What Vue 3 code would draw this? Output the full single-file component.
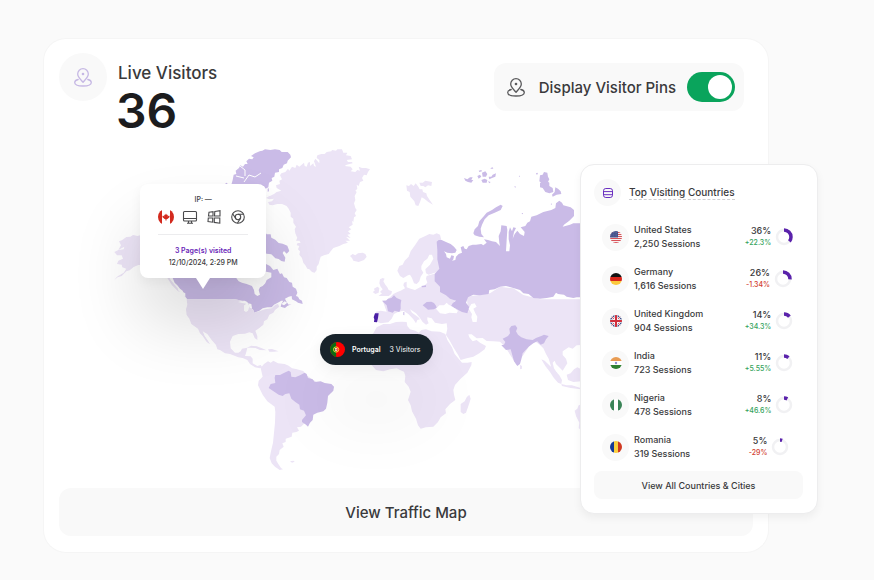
<script setup>
import { ref } from 'vue'

const showPins = ref(true)

const countries = [
  { code: 'us', name: 'United States', sessions: '2,250', share: 36, change: '+22.3%' },
  { code: 'de', name: 'Germany', sessions: '1,616', share: 26, change: '-1.34%' },
  { code: 'gb', name: 'United Kingdom', sessions: '904', share: 14, change: '+34.3%' },
  { code: 'in', name: 'India', sessions: '723', share: 11, change: '+5.55%' },
  { code: 'ng', name: 'Nigeria', sessions: '478', share: 8, change: '+46.6%' },
  { code: 'ro', name: 'Romania', sessions: '319', share: 5, change: '-29%' }
]

// Land shapes; each group has its own origin on the map, three units per map pixel.
const americas = [
  // Alaska
  { tone: 'light', d: 'M-155-90l8-14-6-12 10-4 12-9 12-1 8-5 14 3 10-3 60 20v70l-40 0-28 0-14 6-12 10-10 3-14 14-12 4-10 8 8-10 20-12 8-12-12-4-2-8-14-2 4-10 14-6-4-10-14 0-8-10 12-6 16-2 2-8z' },
  { tone: 'light', d: 'M-30-30l20 5 12 25 18 22 12 14-8-2-18-18-14-22z' },
  // Canada
  { tone: 'dark', d: 'M-30-60L-10-25 8-6 14 8 22 16 30 26 38 32 44 48 52 58H195L206 60 215 62 224 62 232 66 238 78 250 90 252 98 268 92 278 85 292 82 305 82 312 74 322 69 334 62 340 62 334 72 332 80 345 84 352 78 365 72 356 74 350 66 345 56 356 50 365 48 366 58 378 64 384 68 398 72 396 62 388 58 384 50 378 48 382 38 378 26 368 20 366 8 358 6 350-6 342-8 336-20 330-18 322-34 310-30 300-42 288-48 282-60z' },
  { tone: 'dark', d: 'M272-145l14 2 4 6 12 0 2 10 12 6 10 10 12 2 14 6 6 16-8 8-8-8-4 6 8 14-2 12-10-2-8-6-10-2-12-12-14-2-18-8z' },
  { tone: 'dark', d: 'M184-286l4-14 3-16 8-2-2-10 10-8 4-8 8 4 6-8 8 0-4-8 8-8 10 2 4-6-8-4 12-8 14-6 8-2 8-4 16 2 14-2 14 2 6 6 18 0 8 8 2 8-10 10-2 8-10 4-4 10-10 4 0 8-12 2-2 12-8 4 2 8-10 6-2 14-8 4-6-8z' },
  { tone: 'dark', d: 'M166-290l5-2 2 5-5 2z M293-274l3-2 1 10-4 1z' },
  // United States, Mexico and Central America
  { tone: 'light', d: 'M50 58H195L206 60 215 62 228 70 224 78 228 96 234 92 238 80 250 90 252 98 268 94 285 88 305 85 316 74 324 72 328 80 315 90 310 98 298 104 292 118 282 124 280 134 268 144 256 152 262 168 262 180 254 174 248 160 238 157 225 161 205 162 188 168 180 185 182 205 195 218 205 218 212 214 216 206 232 203 228 220 225 228 242 229 248 236 248 250 262 258 272 255 277 262 270 265 255 262 240 252 232 240 218 234 205 232 180 222 165 220 150 210 142 208 138 195 125 180 112 162 98 154 104 168 114 182 120 193 110 186 98 168 90 160 84 146 64 132 58 116 50 105 48 88 52 74z' },
  { tone: 'light', d: 'M230 203l14-6 16 2 16 6 14 6-20-1-14-6-14-1z M294 208l12-1 20 7-14 1-14 0z' },
  // South America
  { tone: 'light', d: 'M272 264l10-12 12-8 8 4 8-6 14 8 20 2 12 5 10 8 12 2 22 6 8 12 30 20-20 60-10 60-15 15-12 2 6 10-8 4-12 2-2 12-18 6 0 10-10 4 4 10-12 10-2 12-8 8 0 12 6 10 8 12 6 4-10 2-14-10-10-10-6-16 4-20 6-26 3-30 3-30 1-32-2-16-22-16-14-20-14-28 2-14 12-12z' },
  { tone: 'light', d: 'M360 544l10-2 4 3-8 3z' },
  { tone: 'dark', d: 'M296 324l6-12 14-3-2-16 2-8 14 0 10-5 16-8 6 4 2 14 12 2 14-6 14-8 6 4 4 12 14 4 6 8 18-2 12 5 20 3 8 8-2 12-16 16-2 20-4 18-8 8-18 4-12 6-2 16-8 8-6 12-6-6-12-8 0-6 12-14-6-14-12-4-2-14-12-8-12-10-6-16-12 2-8 6-12-4z' }
]

const eurasia = [
  // Europe and Asia
  { tone: 'light', d: 'M128 182L140 180 150 172 160 162 172 156 182 152 195 145 190 136 192 128 200 125 200 142 212 146 225 150 240 142 250 140 262 128 258 116 260 108 292 98 305 150 345 178 340 205 385 215 380 170 450 160 480 140 520 145 550 165 600 178H725V315L710 316 698 326 686 322 668 334 668 345 678 356 682 370 668 392 660 384 648 372 644 362 638 368 642 385 650 398 655 410 645 405 636 392 632 376 626 356 618 342 610 325 600 315 580 300 530 375 495 320 480 305 460 304 440 303 428 294 410 295 395 283 385 283 388 292 398 304 410 300 420 308 438 318 434 328 418 340 400 350 380 355 362 360 354 344 340 322 328 300 318 285 322 266 320 250 306 252 285 248 275 235 262 232 262 240 266 250 258 254 248 246 240 234 228 220 210 208 216 218 235 232 240 238 232 240 228 250 220 238 205 222 190 212 174 216 162 222 155 236 145 247 122 250 105 243 106 228 108 215 122 212 140 215z' },
  // Scandinavia and Finland
  { tone: 'light', d: 'M172 92l6-14 10-4 6-12 12-12 6-16 14-20 12-18 18-8 12-6 12 2 10-4 10 4 4 16 2 40 4 40-12 16-14 2-18 6-8-4-2-12 14-14 10-18-4-12-8 0-6 12-10 8-8 14 0 10 6 10-8 12-4 14-8 8-8-2-6-16-6-10-6 2-14 8-10-6z' },
  // British Isles, Iceland
  { tone: 'light', d: 'M116 168l10-8-6-4 8-8-6-8-4-10 2-12 8-4 6 2-4 8 6 10 6 8 4 8 10 4-2 8-8 6-14 0z M98 156l6-4-2-6 10-6 6 4-2 14-10 4z M30 48l8-6 8 4 8-6 14-2 8 4 4 8-8 10-16 6-16-4-4-8z' },
  // Svalbard
  { tone: 'light', d: 'M199-164l8 2 6-6 8 6 6-8 8 10 4 8 8 0 2 8 10 4 2 8 8 12 10 14-14-8-12-10-8-4-4 12-6 14-8-2-4-12-12-14-2-14-8-4z M238-172l10 0 8-6 20 4-2 12-10-2-8 6-6-4-8 0z' },
  // Africa, Madagascar
  { tone: 'light', d: 'M110 262L130 252 150 252 168 246 185 245 200 246 202 258 210 268 226 272 236 278 244 270 258 268 275 274 300 275 316 282 322 300 336 322 344 342 356 356 366 368 382 368 395 366 394 376 382 398 362 416 345 435 340 450 342 464 346 480 330 492 316 508 318 520 302 532 294 546 280 560 258 562 242 566 234 556 228 536 216 514 212 496 204 480 212 455 206 440 194 426 196 408 192 395 180 390 170 385 150 388 130 394 108 390 94 374 78 358 70 320 85 290 100 280z M362 492l12-8 6-12 8-8 4 12-4 14-10 28-8 4-8-6 0-12z M540 374l6 4 0 8-6 2z' },
  // Southeast Asia, Australia
  { tone: 'light', d: 'M604 358l10 4 14 14 16 14 14 16 8 14-2 12-10-4-14-16-10-16-14-18z M664 432l16 4 16 0 26 8 0 4-30-4-26-6z M680 404l12-4 10-12 10-6 12 6v36l-24 2-16-6z M704 512l8-6 4-10 10-4v82l-10-10 2-16-10-20z' },
  // Russia
  { tone: 'dark', d: 'M290 5L296 0 305 0 318 6 332 12 342 20 350 30 346 38 336 40 322 38 312 34 318 42 320 52 330 56 334 46 342 48 340 58 336 62 346 60 348 50 356 42 366 38 362 22 370 18 374 26 380 28 386 18 398 14 408 14 424 12 430 16 440 8 432-2 444 0 456 4 468 6 480 18 478 8 476-12 482-26 484-44 500-42 502-30 500 0 498 34 508 34 510 16 506-2 506-24 510-38 516-26 520-38 528-36 522-24 518-4 524-18 532-28 540-18 552-12 554-24 542-38 556-42 562-52 570-56 574-70 590-74 610-84 634-90 646-96 648-110 658-118 666-112 670-104 692-98 702-90 702-72 694-64 688-58 672-46 668-40 690-46 700-50H725V172L710 172 700 174 680 170 672 164 654 162 648 158 640 170 620 174 600 176 580 174 566 162 550 160 540 150 520 144 498 138 480 140 464 148 448 150 446 162 420 166 400 164 384 172 378 188 388 202 382 220 366 216 348 206 332 200 338 190 348 182 330 176 318 166 300 156 300 140 284 124 284 102 298 86 292 58 292 30z' },
  { tone: 'dark', d: 'M400-20l4-12 10-10 4-14 12-14 10-12 16-8 12-8 14-8 6 4-6 12-18 8-18 8-12 12-8 16-4 12 2 16 8 10-14-2-14-4z' },
  { tone: 'dark', d: 'M600-194l8-2 4-8 10 2 2 12 4 8-6 12-14 2-10-8z M600-172l12 2 10-6 6 4 0 10 10 6 2 12-12 4-12-4-8-12-8-2z M646-158l8 4 8 8 2 8-14 2-12 6-2-6 8-8z M588-200l4-2 2 4-4 2z' },
  { tone: 'dark', d: 'M372-186l10 4 8-6 8 0-4 8 6 0-6 8-10-2-8-4z M412-192l8-4 4 6-8 6z M416-208l8-2 2 4-8 2z M426-202l10-4 6 8-4 8-10 0z M424-180l10-4 8 4-2 8-12 0z M446-190l8 0 4-6 10-4-2 10-10 4-8 4z M452-216l6-2 2 4-8 0z M444-176l8 2-4 4z M522-160l5-1 0 4z M536-192l4-1 0 4z M632-108l3-2 0 6z M544-80l5-1 0 4z' },
  { tone: 'dark', d: 'M244 138l14-2 0 5-12 1z' },
  // France and Corsica, Romania
  { tone: 'dark', d: 'M126 182l12 0 6-6 10-2 8-8 8 8 14 6-2 12 0 14-4 10-14-4-6 6-14-4-4-18-8-8z M190 216l3 0 0 10-3-1z' },
  { tone: 'dark', d: 'M248 196l12-10 14-1 8 4 6 8 2 6-8 5-18 1-6-5z' },
  // India
  { tone: 'dark', d: 'M484 316l8-2 4-8-8-10 16-8 6-8-2-14 6-8 12-2 6 8-4 10 6 10 10 8 16 6 18 2 10-6 16-6 8-4 14 4-8 10-6 12-10 4-10-10-12 6-14 10-18 20-4 18-4 14-8 6-10-14-10-36-14 2z' },
  // Portugal
  { tone: 'active', d: 'M105 220l11 0-2 14-3 13-9-1 1-8-2-6z' }
]

// Inland water and narrow seas drawn over the land.
const lakes = [
  'M288 206l10-10 14 0 8-8 6 6 12 6 16 12-4 8-22-2-12 4-16-2z',
  'M386 206l8-14 10-2 6 10-10 6 6 14 6 10-2 16-12 0-4-14 2-10z'
]
</script>

<template>
  <main class="page">
    <div class="stage">
      <section class="card">
        <header class="head">
          <div class="summary">
            <span class="badge">
              <svg class="pin" viewBox="0 0 18 19" aria-hidden="true">
                <path d="M9 14.3C7.4 12 3.7 9.300 3.700 6a5.300 5.300 0 0 1 10.600 0C14.300 9.300 10.600 12 9 14.300z" />
                <circle class="dot" cx="9" cy="6" r="1.300" />
                <path d="M4.200 11.500C2 12 .7 13.100.7 14.500c0 2.100 3.600 3.500 8.300 3.500s8.300-1.400 8.300-3.500c0-1.400-1.300-2.500-3.500-3" />
              </svg>
            </span>
            <div>
              <h1>Live Visitors</h1>
              <p class="count">36</p>
            </div>
          </div>
          <label class="pins-toggle">
            <svg class="pin" viewBox="0 0 18 19" aria-hidden="true">
              <path d="M9 14.3C7.4 12 3.7 9.300 3.700 6a5.300 5.300 0 0 1 10.600 0C14.300 9.300 10.600 12 9 14.300z" />
              <circle class="dot" cx="9" cy="6" r="1.300" />
              <path d="M4.200 11.500C2 12 .7 13.100.7 14.500c0 2.100 3.600 3.500 8.300 3.500s8.300-1.400 8.300-3.500c0-1.400-1.300-2.500-3.500-3" />
            </svg>
            <span>Display Visitor Pins</span>
            <input v-model="showPins" type="checkbox" role="switch" />
          </label>
        </header>

        <div class="map">
          <svg class="world" viewBox="59 140 694 340" aria-hidden="true">
            <g transform="translate(170 280) scale(.33333)">
              <path v-for="(s, i) in americas" :key="i" :class="s.tone" :d="s.d" />
              <path class="water" d="M196-10l10 14 10 4 14 4 16 6 6 12 2 12 8 6 8-4-4-14 4-8 8-4 8-8 4-10 14-8 0-14-30-6z" />
              <path class="water" d="M204 66l10-3 12 3 4 5-14-2z M222 76l8-2-2 22-6-4z M234 70l10 2 2 12-6 0z M46 40l-8-4-14-14 0 8 14 14 8 6z M334 72l10-8 8 4-10 8z" />
            </g>
            <g transform="translate(250 140) scale(.33333)">
              <path class="light" d="M60 168l12-6 8-6 14-4-14-8-2-8 12-4-2-10 8-4-6-12 4-6 12-4 8-10 4 6 8-12 10 4 4-10 8 6 14-12 2 10 6 2 4-12 6-2 0 12 10-8 2 8 6 2-6-16 4-8 12 14 0-10-8-6 2-8 12-4 10 0 6-6 14-2 2-4 12 2 4-4 14 0 4 10 12 0-4 8 14 2 4 10-16 2 4 6 12 0 2 4-18 4-6 4 18 2 6 8-6 6 14 2 6-6 8 2-4-12 10 4 12 0 12 4-6 8-4 10-8-2-6 10 4 8-10 4-4 12-6-4 2 12-6 6 4 4-6 12 2 12-4 10 4 14 4 6-6 10 4 8-6 4-2 14-4-4 2 12-12 8 8 6-10 6 8 8-10 2 10 10-14-4 12 12-14 0 8 6-14 4-12 6-18 6-8 10-6 8-14 4-10 4-4 14-2 8-6 8 0 10-6 8-8-2-8-8-6-2-6-10-6-8-4-14-8-10 2-10-6-6 4-10-8-2 2-6 10-2-4-6-10 0 4-8-6-14-2-12 4-8-8-12 0-12-8-6 0-12-6-12-6-8-14-6-14 0-14 4-10-2-4-8 12-2 6-8-14 2-10-4 10-6-14-4z" />
            </g>
            <g transform="translate(340 240) scale(.33333)">
              <path v-for="(s, i) in eurasia" :key="i" :class="s.tone" :d="s.d" />
              <path v-for="(d, i) in lakes" :key="'l' + i" class="water" :d="d" />
            </g>
            <path class="channel" d="M244 182l5-7 6 2 6-4M240 166l5 4 0 6M236 176l8 2" />
          </svg>

          <template v-if="showPins">
            <div class="country-pin">
              <svg class="flag" viewBox="0 0 16 16" aria-hidden="true">
                <clipPath id="ptc"><circle cx="8" cy="8" r="8" /></clipPath>
                <g clip-path="url(#ptc)">
                  <path fill="#f00" d="M0 0h16v16H0z" />
                  <path fill="#0a6b12" d="M0 0h6.500v16H0z" />
                  <circle cx="6.500" cy="8" r="2.800" fill="none" stroke="#f5df3c" stroke-width="1" />
                  <path fill="#f5e9d8" d="M5.200 6.500h2.600V9L6.500 10 5.200 9z" />
                  <path fill="#d22" d="M6 7.200h1v1.600H6z" />
                </g>
              </svg>
              <strong>Portugal</strong>
              <span>3 Visitors</span>
            </div>

            <article class="visitor">
              <p>IP: —</p>
              <div class="traits">
                <svg viewBox="0 0 16 16" aria-hidden="true">
                  <clipPath id="cac"><circle cx="8" cy="8" r="8" /></clipPath>
                  <g clip-path="url(#cac)">
                    <path fill="#fff" d="M0 0h16v16H0z" />
                    <path fill="#d32a1e" d="M0 0h4v16H0zM12 0h4v16h-4zM8 4.500l.9 1.600 1-.4-.3 1.800 1.500-.9.600 1.500-2.300 2-.9.200-.2 1.500h-.6l-.2-1.500-.9-.2-2.300-2 .6-1.500 1.500.9-.3-1.800 1 .4z" />
                  </g>
                </svg>
                <svg class="line" viewBox="0 0 16 16" aria-hidden="true">
                  <rect x="1.500" y="2.500" width="13" height="9.500" rx="1" />
                  <path d="M1.500 9.500h13M6.500 12v2M9.500 12v2M5 14.200h6" />
                </svg>
                <svg class="line" viewBox="0 0 16 16" aria-hidden="true">
                  <path d="M3 3.300l4-.6v4.300H2.500zM8.800 2.500l5.200-.8v5.300H8.500zM2.300 9h4.400v4.200l-4.700-.7zM8.300 9h5.500v5.200l-5.500-.8z" />
                </svg>
                <svg class="line" viewBox="0 0 16 16" aria-hidden="true">
                  <circle cx="8" cy="8" r="6.300" />
                  <circle cx="8" cy="8" r="2.700" />
                  <path d="M8 5.300h5.700M5.700 9.400L2.600 4.700M10.300 9.400L7.400 14.200" />
                </svg>
              </div>
              <hr />
              <p class="visited">3 Page(s) visited</p>
              <p>12/10/2024, 2:29 PM</p>
            </article>
          </template>
        </div>

        <button type="button" class="traffic">View Traffic Map</button>
      </section>

      <aside class="panel">
        <header class="panel-head">
          <span class="panel-icon">
            <svg viewBox="0 0 12 12" aria-hidden="true">
              <rect x="1.500" y="1.500" width="9" height="9" rx="2.300" />
              <path d="M1.500 4.600h9M1.500 7.700h9" />
            </svg>
          </span>
          <h2>Top Visiting Countries</h2>
        </header>

        <ul>
          <li v-for="c in countries" :key="c.code">
            <span class="flag-disc">
              <svg viewBox="0 0 12 12" aria-hidden="true">
                <clipPath :id="'f-' + c.code"><circle cx="6" cy="6" r="6" /></clipPath>
                <g :clip-path="`url(#f-${c.code})`">
                  <template v-if="c.code === 'us'">
                    <path fill="#f6f2f2" d="M0 0h12v12H0z" />
                    <path fill="#d8535a" d="M0 1h12v1H0zM0 3h12v1H0zM0 5h12v1H0zM0 7h12v1H0zM0 9h12v1H0zM0 11h12v1H0z" />
                    <path fill="#46538c" d="M0 0h8v6.500H0z" />
                    <path stroke="#8e98c0" stroke-width=".5" stroke-dasharray=".6 1" d="M0 1.500h8M0 3.200h8M0 4.900h8" />
                  </template>
                  <template v-else-if="c.code === 'de'">
                    <path fill="#111" d="M0 0h12v4H0z" />
                    <path fill="#d8261c" d="M0 4h12v4H0z" />
                    <path fill="#fbc93d" d="M0 8h12v4H0z" />
                  </template>
                  <template v-else-if="c.code === 'gb'">
                    <path fill="#2d3f7d" d="M0 0h12v12H0z" />
                    <path stroke="#fff" stroke-width="2" d="M0 0l12 12M12 0L0 12" />
                    <path stroke="#d22f3c" stroke-width=".8" d="M0 0l12 12M12 0L0 12" />
                    <path stroke="#fff" stroke-width="3.400" d="M6 0v12M0 6h12" />
                    <path stroke="#d22f3c" stroke-width="2" d="M6 0v12M0 6h12" />
                  </template>
                  <template v-else-if="c.code === 'in'">
                    <path fill="#e89b52" d="M0 0h12v4H0z" />
                    <path fill="#fff" d="M0 4h12v4H0z" />
                    <path fill="#2f8132" d="M0 8h12v4H0z" />
                    <circle cx="6" cy="6" r="1.200" fill="#8d90cc" />
                  </template>
                  <template v-else-if="c.code === 'ng'">
                    <path fill="#fff" d="M0 0h12v12H0z" />
                    <path fill="#3a8457" d="M0 0h4v12H0zM8 0h4v12H8z" />
                  </template>
                  <template v-else>
                    <path fill="#163a97" d="M0 0h4v12H0z" />
                    <path fill="#fbd03f" d="M4 0h4v12H4z" />
                    <path fill="#d03a22" d="M8 0h4v12H8z" />
                  </template>
                </g>
              </svg>
            </span>
            <div class="place">
              <span>{{ c.name }}</span>
              <span>{{ c.sessions }} Sessions</span>
            </div>
            <div class="metric">
              <div class="figures">
                <span>{{ c.share }}%</span>
                <small :class="c.change[0] === '-' ? 'down' : 'up'">{{ c.change }}</small>
              </div>
              <svg class="donut" viewBox="0 0 18 18" aria-hidden="true">
                <circle class="track" cx="9" cy="9" r="7" />
                <circle
                  class="arc"
                  cx="9"
                  cy="9"
                  r="7"
                  pathLength="100"
                  :stroke-dasharray="`${c.share} ${100 - c.share}`"
                  transform="rotate(-90 9 9)"
                />
              </svg>
            </div>
          </li>
        </ul>

        <button type="button" class="view-all">View All Countries &amp; Cities</button>
      </aside>
    </div>
  </main>
</template>

<style>
body {
  margin: 0;
  background: #fafafa;
}
</style>

<style scoped>
.page {
  padding: 39px 56px 28px 44px;
  color: #3a3a3c;
  font-family: Inter, "Liberation Sans", sans-serif;
}

.stage {
  position: relative;
  padding-right: 50px;
}

h1,
h2,
p,
ul {
  margin: 0;
  padding: 0;
}

button {
  border: 0;
  background: #f9f9f9;
  color: inherit;
  font-family: inherit;
  font-weight: 500;
  cursor: pointer;
}

.card {
  display: flex;
  flex-direction: column;
  padding: 14px 15px 16px;
  border-radius: 22px;
  background: #fff;
  box-shadow: 0 0 0 1px #f5f5f5;
}

.head {
  display: flex;
  align-items: flex-start;
  justify-content: space-between;
  min-height: 87px;
}

.summary {
  display: flex;
  gap: 9px;
}

.badge {
  display: grid;
  place-items: center;
  width: 48px;
  height: 48px;
  border-radius: 50%;
  background: #f9f9f9;
  color: #c6b8e4;
}

.pin {
  width: 18px;
  height: 19px;
  fill: none;
  stroke: currentColor;
  stroke-width: 1.3;
  stroke-linejoin: round;
  stroke-linecap: round;
}

.pin .dot {
  fill: currentColor;
  stroke: none;
}

h1 {
  padding: 8px 0 0 2px;
  font-size: 17px;
  font-weight: 500;
  line-height: 24px;
}

.count {
  color: #1c1c1e;
  font-size: 48px;
  font-weight: 600;
  line-height: 52px;
}

.pins-toggle {
  display: flex;
  align-items: center;
  box-sizing: border-box;
  height: 48px;
  margin: 10px 9px 0 0;
  padding: 0 9px 0 13px;
  border-radius: 12px;
  background: #f9f9f9;
  font-size: 15px;
  font-weight: 500;
  cursor: pointer;
}

.pins-toggle .pin {
  color: #5a5a5c;
}

.pins-toggle span {
  margin: 0 11px 0 14px;
}

.pins-toggle input {
  display: flex;
  align-items: center;
  box-sizing: border-box;
  width: 48px;
  height: 30px;
  margin: 0;
  padding: 3px;
  border-radius: 15px;
  background: #c9c9ce;
  appearance: none;
  cursor: pointer;
}

.pins-toggle input::before {
  width: 24px;
  height: 24px;
  border-radius: 50%;
  background: #fff;
  content: "";
}

.pins-toggle input:checked {
  justify-content: flex-end;
  background: #0aa45c;
}

.map {
  position: relative;
}

.world {
  display: block;
  width: 100%;
  height: auto;
}

.light {
  fill: #ece4f6;
}

.dark {
  fill: #cabbe7;
}

.active {
  fill: #4a1fa5;
}

.water {
  fill: #fff;
}

.channel {
  fill: none;
  stroke: #fff;
  stroke-width: 1;
}

.country-pin {
  position: absolute;
  top: 57%;
  left: 37.6%;
  display: flex;
  align-items: center;
  box-sizing: border-box;
  height: 31px;
  padding: 0 12px 0 10px;
  border-radius: 16px;
  background: #18232b;
  box-shadow: 0 50px 70px rgba(0, 0, 0, 0.08), 0 4px 16px rgba(0, 0, 0, 0.06);
  color: #fff;
  font-size: 7px;
  white-space: nowrap;
}

.country-pin .flag {
  width: 15px;
  height: 15px;
}

.country-pin strong {
  margin: 0 9px 0 7px;
  font-weight: 600;
}

.visitor {
  position: absolute;
  top: 13%;
  left: 11.7%;
  display: flex;
  flex-direction: column;
  align-items: center;
  box-sizing: border-box;
  width: 126px;
  padding: 10px 18px 9px;
  border-radius: 8px;
  background: #fff;
  box-shadow: 0 44px 70px rgba(0, 0, 0, 0.14), 0 4px 12px rgba(0, 0, 0, 0.05);
  font-size: 7px;
  font-weight: 500;
  line-height: 12px;
  white-space: nowrap;
}

.visitor::after {
  position: absolute;
  top: 100%;
  left: 50%;
  margin-left: -7px;
  border: 7px solid transparent;
  border-top: 11px solid #fff;
  border-bottom: 0;
  content: "";
}

.traits {
  display: flex;
  gap: 8px;
  align-self: stretch;
  margin-top: 3px;
}

.traits svg {
  width: 16px;
  height: 16px;
}

.traits .line {
  fill: none;
  stroke: #4a4a4c;
  stroke-width: 1.1;
}

.visitor hr {
  align-self: stretch;
  height: 1px;
  margin: 9px 0 10px;
  border: 0;
  background: #ececee;
}

.visited {
  color: #6a1fb8;
  font-weight: 600;
}

.traffic {
  height: 48px;
  margin-top: 8px;
  border-radius: 12px;
  font-size: 15px;
}

.panel {
  position: absolute;
  top: 125px;
  right: 0;
  box-sizing: border-box;
  width: 238px;
  padding: 14px 14px 14px 13px;
  border: 1px solid #ededee;
  border-radius: 14px;
  background: #fff;
  box-shadow: 0 4px 8px rgba(0, 0, 0, 0.05);
}

.panel-head {
  display: flex;
  align-items: center;
  gap: 8px;
  margin-bottom: 10px;
}

.panel-icon,
.flag-disc {
  display: grid;
  flex: none;
  place-items: center;
  width: 27px;
  height: 27px;
  border-radius: 50%;
  background: #f9f9f9;
}

.panel-icon svg {
  width: 12px;
  height: 12px;
  fill: none;
  stroke: #6a2fc0;
  stroke-width: 1;
}

h2 {
  border-bottom: 1px dashed #cfcfd2;
  font-size: 10px;
  font-weight: 500;
  line-height: 13px;
}

ul {
  list-style: none;
}

li {
  display: flex;
  align-items: center;
  height: 42px;
  padding: 0 9px 0 8px;
  font-size: 9px;
  font-weight: 500;
  line-height: 14px;
}

.flag-disc svg {
  width: 12px;
  height: 12px;
}

.place {
  display: flex;
  flex: 1;
  flex-direction: column;
  margin-left: 5px;
}

.metric {
  display: flex;
  align-items: center;
  justify-content: center;
  gap: 4px;
  width: 50px;
}

.figures {
  display: flex;
  flex-direction: column;
  align-items: flex-end;
  line-height: 12px;
}

.figures small {
  font-size: 7px;
}

.up {
  color: #35a35c;
}

.down {
  color: #d2412f;
}

.donut {
  width: 18px;
  height: 18px;
  fill: none;
}

.track {
  stroke: #f1f1f3;
  stroke-width: 2.5;
}

.arc {
  stroke: #5a22ab;
  stroke-width: 3.5;
}

.view-all {
  width: 100%;
  height: 28px;
  margin-top: 3px;
  border-radius: 8px;
  font-size: 9px;
}
</style>
